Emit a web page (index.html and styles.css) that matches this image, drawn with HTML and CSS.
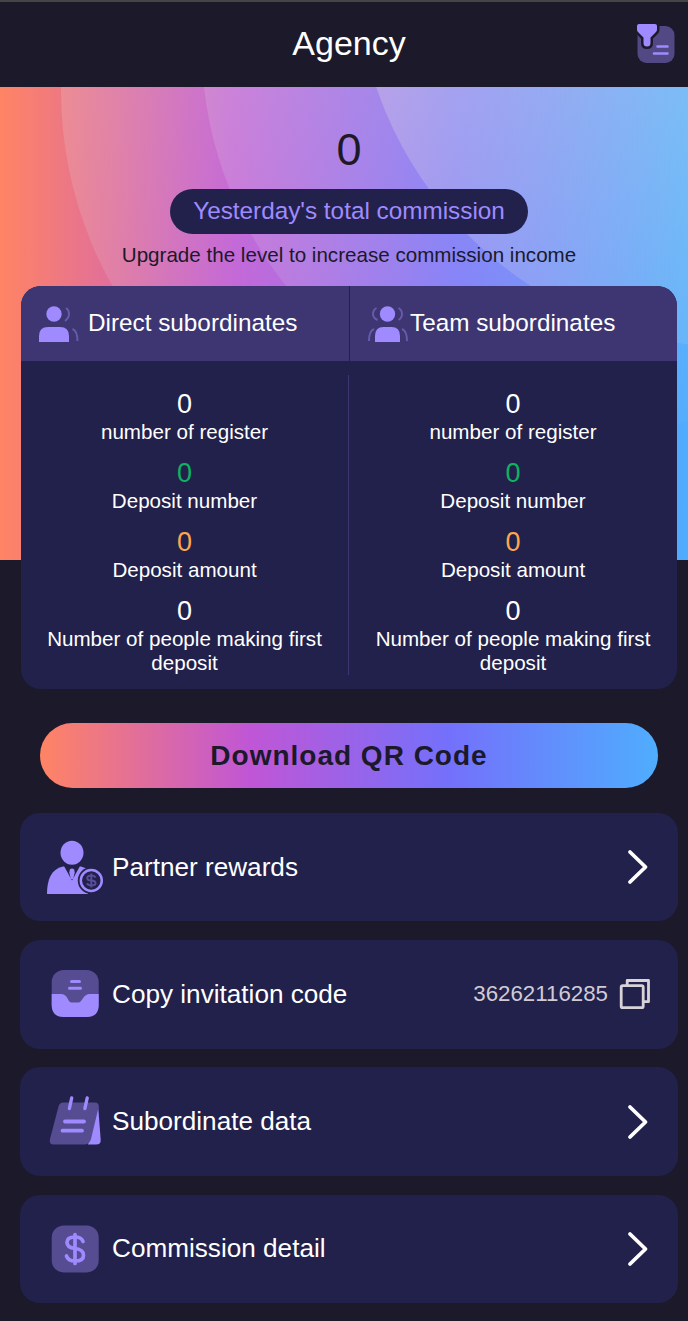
FILE: index.html
```html
<!DOCTYPE html>
<html lang="en">
<head>
<meta charset="utf-8">
<title>Agency</title>
<link rel="stylesheet" href="styles.css">
</head>
<body>
<header class="topbar">
  <h1 class="title">Agency</h1>
  <svg class="filter-icon" viewBox="0 0 38 40">
    <rect x="0.500" y="2" width="37" height="37" rx="9" fill="#524884"/>
    <path d="M2 0h16q2 0 2 2v3.500q0 1.500-1 2.500l-5.500 5.500v5.500q0 3.500-3.500 3.500t-3.500-3.500v-5.500l-5.500-5.500q-1-1-1-2.500V2q0-2 2-2z" fill="#9f8aff" stroke="#1b192a" stroke-width="5" paint-order="stroke"/>
    <path d="M20.500 22.500h10M17 29.500h13.500" stroke="#9f8aff" stroke-width="2.600" stroke-linecap="round"/>
  </svg>
</header>
<main class="content">
  <svg class="hero-bg" viewBox="0 87 688 473" preserveAspectRatio="none">
    <defs>
      <linearGradient id="base"><stop offset="0" stop-color="#ff8464"/><stop offset=".34" stop-color="#c058d6"/><stop offset=".66" stop-color="#7671fb"/><stop offset="1" stop-color="#4fadfe"/></linearGradient>
      <linearGradient id="veil" x1="0" y1=".35" x2=".75" y2="1"><stop offset="0" stop-color="#e2e2e2" stop-opacity=".21"/><stop offset="1" stop-color="#e2e2e2" stop-opacity="0"/></linearGradient>
      <linearGradient id="veil-bright" x1="0" y1=".35" x2=".75" y2="1"><stop offset="0" stop-color="#e2e2e2" stop-opacity=".36"/><stop offset="1" stop-color="#e2e2e2" stop-opacity=".03"/></linearGradient>
    </defs>
    <rect y="87" width="688" height="473" fill="url(#base)"/>
    <circle cx="460" cy="90" r="399" fill="url(#veil)"/>
    <circle cx="591" cy="44" r="389.400" fill="url(#veil)"/>
    <circle cx="740" cy="-36" r="384" fill="url(#veil-bright)"/>
  </svg>
  <section class="summary">
    <div class="total">0</div>
    <div class="total-label">Yesterday's total commission</div>
    <div class="hint">Upgrade the level to increase commission income</div>
  </section>
  <section class="stats">
    <div class="stats-head">
      <div class="tab">
        <svg class="people" viewBox="0 0 42 40"><g fill="#9f8aff"><circle cx="16" cy="9" r="7.700"/><path d="M1 37V31Q1 22 10 22H22Q31 22 31 31V37z"/></g><path d="M28 3q3 2 3 6t-4 7M34.500 24q5 2 5 12" fill="none" stroke="#665aaa" stroke-width="2"/></svg>
        <span>Direct subordinates</span>
      </div>
      <div class="tab team">
        <svg class="people" viewBox="0 0 42 40"><g fill="#9f8aff"><circle cx="20.500" cy="9" r="7.700"/><path d="M8 37V31Q8 22 16.500 22H24.500Q33 22 33 31V37z"/></g><path d="M31.500 3q3.500 2 3.500 6t-3.500 6M9.500 3q-3.500 2-3.500 6t4.500 6M35 24q5 2 5 12M7 24q-5 2-5 12" fill="none" stroke="#665aaa" stroke-width="2"/></svg>
        <span>Team subordinates</span>
      </div>
    </div>
    <div class="stats-body">
      <div class="column">
        <div class="stat"><b class="value">0</b><span>number of register</span></div>
        <div class="stat"><b class="value green">0</b><span>Deposit number</span></div>
        <div class="stat"><b class="value orange">0</b><span>Deposit amount</span></div>
        <div class="stat"><b class="value">0</b><span>Number of people making first deposit</span></div>
      </div>
      <div class="column">
        <div class="stat"><b class="value">0</b><span>number of register</span></div>
        <div class="stat"><b class="value green">0</b><span>Deposit number</span></div>
        <div class="stat"><b class="value orange">0</b><span>Deposit amount</span></div>
        <div class="stat"><b class="value">0</b><span>Number of people making first deposit</span></div>
      </div>
    </div>
  </section>
  <button class="download">Download QR Code</button>
  <nav class="menu">
    <a class="row">
      <svg class="row-icon" viewBox="0 0 60 60"><g fill="#9f8aff"><ellipse cx="27" cy="15.800" rx="11.500" ry="12"/><path d="M2 57C2 43 6 32 18 29.500H36L43 32L43 57z"/></g><path d="M19 29l8 14.500 8-14.500" fill="#22214b"/><path d="M24.800 32.500q2.200-2 4.400 0l.5 3-1.500 6.500h-2.400l-1.500-6.500z" fill="#9f8aff"/><circle cx="46.300" cy="43.500" r="13.500" fill="#22214b"/><circle cx="46.300" cy="43.500" r="10.500" fill="#22214b" stroke="#9f8aff" stroke-width="2.500"/><path d="M50.500 40.500q-1-2-4.200-2-4 0-4 2.500t4 2.500 4.200 2.500-4.200 2.500q-3.200 0-4.300-2.200M46.300 36.500v14" fill="none" stroke="#574d99" stroke-width="2"/></svg>
      <span>Partner rewards</span>
      <svg class="chevron" viewBox="0 0 22 36"><path d="M3 3L18.500 18L3 33" fill="none" stroke="#fff" stroke-width="3.800" stroke-linecap="round" stroke-linejoin="round"/></svg>
    </a>
    <a class="row">
      <svg class="row-icon" viewBox="0 0 60 60"><rect x="6.700" y="6" width="47" height="47" rx="12" fill="#554c91"/><path d="M6.700 30H16Q20 30 22 33.500L24 37Q25 38.500 27 38.500H33Q35 38.500 36 37L38.500 33.500Q41 30 44.500 30H53.700V41Q53.700 53 41.700 53H18.700Q6.700 53 6.700 41z" fill="#9f8aff"/><path d="M26.500 17.500h8M24.500 24.200h11" stroke="#9f8aff" stroke-width="3" stroke-linecap="round"/></svg>
      <span>Copy invitation code</span>
      <span class="code">36262116285</span>
      <svg class="copy" viewBox="0 0 32 32" fill="none" stroke="#d9d2d6" stroke-width="2.800"><rect x="2.200" y="7.700" width="22" height="22" rx="1.500"/><path d="M8.200 7.500V2.500H29.500V23.700H24.500" stroke-linejoin="round"/></svg>
    </a>
    <a class="row">
      <svg class="row-icon" viewBox="0 0 60 60"><path d="M43 52.500L53 12L55.700 48Q56 52.500 51 52.500z" fill="#9f8aff"/><path d="M18.500 10.500H49.500Q54.500 10.500 53.500 15.500L46 47Q44.500 52.500 39 52.500H9Q3.500 52.500 5 47L13.500 14.500Q14.500 10.500 18.500 10.500z" fill="#554c91"/><path d="M26.700 6l-2.300 10.500M42.200 6l-2.300 10.500" stroke="#9f8aff" stroke-width="3.400" stroke-linecap="round"/><path d="M20 29.500h19M17.500 38.700h19.500" stroke="#9f8aff" stroke-width="3.800" stroke-linecap="round"/></svg>
      <span>Subordinate data</span>
      <svg class="chevron" viewBox="0 0 22 36"><path d="M3 3L18.500 18L3 33" fill="none" stroke="#fff" stroke-width="3.800" stroke-linecap="round" stroke-linejoin="round"/></svg>
    </a>
    <a class="row">
      <svg class="row-icon" viewBox="0 0 60 60"><rect x="6.700" y="6.500" width="47" height="47" rx="12" fill="#554c91"/><path d="M38 22.500Q36.500 18 30 18Q22 18 22 23.500Q22 28.500 30 29.500Q38.500 30.500 38.500 36.200Q38.500 42 30 42Q23 42 21.500 37M30 15.500V44.500" fill="none" stroke="#9f8aff" stroke-width="3.700" stroke-linecap="round"/></svg>
      <span>Commission detail</span>
      <svg class="chevron" viewBox="0 0 22 36"><path d="M3 3L18.500 18L3 33" fill="none" stroke="#fff" stroke-width="3.800" stroke-linecap="round" stroke-linejoin="round"/></svg>
    </a>
  </nav>
</main>
</body>
</html>
```
FILE: styles.css
```css
* { box-sizing: border-box; }
body {
  margin: 0;
  height: 1321px;
  overflow: hidden;
  background: #1b192a;
  color: #fff;
  font-family: "Liberation Sans", Arial, sans-serif;
}
.topbar {
  position: relative;
  display: flex;
  justify-content: center;
  align-items: center;
  height: 87px;
  padding: 0 0 4px 10px;
  border-top: 2px solid #454545;
}
.title { margin: 0; font-size: 34px; font-weight: 400; line-height: 40px; }
.filter-icon { position: absolute; right: 13px; top: 22px; width: 38px; height: 40px; }
.content { position: relative; padding: 0 10px 0 20px; }
.hero-bg { position: absolute; left: 0; top: 0; z-index: -1; width: 688px; height: 473px; }
.summary {
  display: flex;
  flex-direction: column;
  align-items: center;
  height: 199px;
  padding-top: 37px;
  color: #1b192a;
}
.total { font-size: 45px; line-height: 52px; }
.total-label {
  width: 358px;
  height: 45px;
  margin-top: 13px;
  border-radius: 23px;
  background: #22214b;
  color: #9f8aff;
  font-size: 24.300px;
  line-height: 44px;
  text-align: center;
}
.hint { margin-top: 9px; font-size: 20.600px; line-height: 24px; }
.stats {
  width: 656px;
  height: 403px;
  margin-left: 1px;
  border-radius: 20px;
  overflow: hidden;
  background: #22214b;
}
.stats-head { display: flex; height: 75px; background: #3d3672; }
.tab {
  display: flex;
  align-items: center;
  gap: 8px;
  width: 328px;
  padding: 0 0 1px 17px;
  font-size: 24.300px;
}
.team { gap: 1px; border-left: 1px solid #22214b; }
.people { width: 42px; height: 40px; margin-top: 3px; }
.stats-body { display: flex; padding-top: 14px; }
.column {
  display: flex;
  flex-direction: column;
  gap: 13px;
  width: 328px;
  height: 300px;
  padding: 13px 20px 0;
}
.column:first-child { border-right: 1px solid #3d3672; }
.stat { display: flex; flex-direction: column; font-size: 20.600px; line-height: 24px; text-align: center; }
.value { height: 32px; font-size: 27px; font-weight: 400; line-height: 32px; }
.green { color: #0fb260; }
.orange { color: #ffa54f; }
.download {
  display: block;
  width: 618px;
  height: 65px;
  margin: 34px 0 25px 20px;
  padding: 0;
  border: 0;
  border-radius: 33px;
  background: linear-gradient(90deg, #ff8464, #c056d6 34%, #7470fb 66%, #4fadfe);
  color: #1b192a;
  font: 700 28px/65px "Liberation Sans", Arial, sans-serif;
  letter-spacing: 1px;
}
.menu { display: flex; flex-direction: column; gap: 18.800px; }
.row {
  display: flex;
  align-items: center;
  width: 658px;
  height: 108.400px;
  padding: 0 29px 0 25px;
  border-radius: 20px;
  background: #22214b;
  font-size: 26.150px;
}
.row-icon { width: 60px; height: 60px; margin-right: 7px; }
.chevron { width: 22px; height: 36px; margin-left: auto; }
.code { margin: 0 0 1px auto; color: #d0cbd4; font-size: 22.300px; }
.copy { width: 32px; height: 32px; margin: 0 -2px 1px 11px; }
```
